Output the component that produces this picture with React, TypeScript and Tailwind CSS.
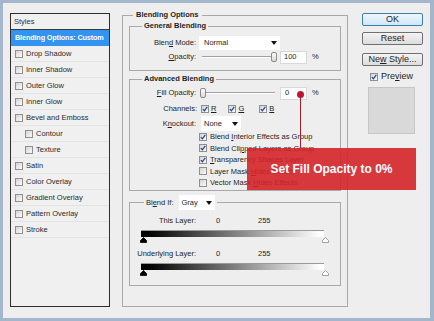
import React from "react";

const U = ({ children }: { children: React.ReactNode }) => (
  <span className="underline decoration-[0.5px] underline-offset-[1px]">{children}</span>
);

function Box({ checked = false }: { checked?: boolean }) {
  return (
    <span className="flex h-[8px] w-[8px] shrink-0 items-center justify-center border border-[#8f8f8f] bg-[linear-gradient(135deg,#d4d4d4,#fbfbfb)]">
      {checked && (
        <svg width="6" height="6" viewBox="0 0 6 6">
          <path d="M0.8 3.1 2.4 4.8 5.3 0.9" fill="none" stroke="#2a4a93" strokeWidth="1.3" />
        </svg>
      )}
    </span>
  );
}

function Arrow() {
  return (
    <svg width="6" height="4" viewBox="0 0 6 4">
      <polygon points="0,0 6,0 3,4" fill="#111" />
    </svg>
  );
}

function Slider({ right = false }: { right?: boolean }) {
  return (
    <div className="relative ml-[6px] h-[14px] w-[73px]">
      <div className="absolute left-0 right-0 top-[6px] h-[2px] border-t border-[#a0a0a0] bg-white" />
      <div
        className={`absolute top-[2px] h-[10px] w-[6px] rounded-[2px] border border-[#8a8a8a] bg-[linear-gradient(#fdfdfd,#d8d8d8)] ${
          right ? "right-[-2px]" : "left-[-2px]"
        }`}
      />
    </div>
  );
}

function Marker({ white = false }: { white?: boolean }) {
  return (
    <svg width="7" height="6" viewBox="0 0 7 6">
      <path
        d="M3.5 0.5 6.5 3.5 6.5 5.5 0.5 5.5 0.5 3.5Z"
        fill={white ? "#fff" : "#000"}
        stroke={white ? "#8a8a8a" : "#000"}
        strokeWidth="0.8"
      />
    </svg>
  );
}

const styles = [
  { label: "Drop Shadow", indent: false },
  { label: "Inner Shadow", indent: false },
  { label: "Outer Glow", indent: false },
  { label: "Inner Glow", indent: false },
  { label: "Bevel and Emboss", indent: false },
  { label: "Contour", indent: true },
  { label: "Texture", indent: true },
  { label: "Satin", indent: false },
  { label: "Color Overlay", indent: false },
  { label: "Gradient Overlay", indent: false },
  { label: "Pattern Overlay", indent: false },
  { label: "Stroke", indent: false },
];

function GradientRow() {
  return (
    <>
      <div className="ml-[11px] mt-[3px] h-[7px] w-[183px] border-t border-[#9a9a9a] bg-[linear-gradient(to_right,#000_4%,#fff_98%)]" />
      <div className="ml-[10px] flex h-[6px] w-[189px] justify-between">
        <Marker />
        <Marker white />
      </div>
    </>
  );
}

export default function App() {
  return (
    <div className="relative h-[321px] w-[434px] overflow-hidden border-b-[3px] border-l-[3px] border-r-[4px] border-t-[3px] border-[#a3b6cb] bg-[#eeeeee] font-['Liberation_Sans',Arial,sans-serif] text-[7.5px] text-[#1e1e1e]">
      <div className="flex pl-[7px] pt-[7px]">
        {/* Styles list */}
        <div className="mt-[3px] h-[294px] w-[100px] border border-[#2f2f2f] bg-[#f0f0f0]">
          <div className="flex h-[16px] items-center border-b border-[#3a3a3a] pl-[3px] text-[#333]">Styles</div>
          <div className="flex h-[16px] items-center whitespace-nowrap bg-[#3393f0] pl-[4px] text-[7.2px] font-bold tracking-[-0.1px] text-white">
            Blending Options: Custom
          </div>
          {styles.map((s) => (
            <div
              key={s.label}
              className={`flex h-[16px] items-center gap-[3px] border-b border-[#e3e3e3] text-[#2a2a2a] ${
                s.indent ? "pl-[14px]" : "pl-[4px]"
              }`}
            >
              <Box />
              <span>{s.label}</span>
            </div>
          ))}
        </div>

        {/* Blending Options */}
        <fieldset className="ml-[12px] h-[297px] w-[226px] border border-[#a9a9a9] px-[6px] pt-[1px]">
          <legend className="ml-[4px] px-[3px] font-bold leading-[10px]">Blending Options</legend>

          <fieldset className="border border-[#a9a9a9] pb-[6px]">
            <legend className="ml-[12px] px-[2px] font-bold leading-[10px]">General Blending</legend>
            <div className="mt-[5px] flex h-[14px] items-center">
              <span className="w-[66px] text-right">
                Blen<U>d</U> Mode:
              </span>
              <div className="ml-[3px] flex h-[14px] w-[81px] items-center justify-between bg-white pl-[5px] pr-[3px]">
                <span>Normal</span>
                <Arrow />
              </div>
            </div>
            <div className="flex h-[14px] items-center">
              <span className="w-[66px] text-right">
                <U>O</U>pacity:
              </span>
              <Slider right />
              <div className="ml-[5px] flex h-[13px] w-[27px] items-center border border-[#d8d8d8] bg-white pl-[3px]">100</div>
              <span className="ml-[5px]">%</span>
            </div>
          </fieldset>

          <fieldset className="mt-[3px] border border-[#a9a9a9] pb-[1.5px]">
            <legend className="ml-[12px] px-[2px] font-bold leading-[10px]">Advanced Blending</legend>
            <div className="mt-[2px] flex h-[14px] items-center">
              <span className="w-[66px] text-right">
                <U>F</U>ill Opacity:
              </span>
              <Slider />
              <div className="ml-[5px] flex h-[13px] w-[27px] items-center border border-[#d8d8d8] bg-white pl-[4px]">0</div>
              <span className="ml-[5px]">%</span>
            </div>
            <div className="mt-[2px] flex h-[14px] items-center">
              <span className="w-[67px] text-right">Channels:</span>
              <span className="ml-[4px] flex items-center gap-[2px]">
                <Box checked />
                <U>R</U>
              </span>
              <span className="ml-[12px] flex items-center gap-[2px]">
                <Box checked />
                <U>G</U>
              </span>
              <span className="ml-[15px] flex items-center gap-[2px]">
                <Box checked />
                <U>B</U>
              </span>
            </div>
            <div className="flex h-[15px] items-center">
              <span className="w-[66px] text-right">
                K<U>n</U>ockout:
              </span>
              <div className="ml-[5px] flex h-[15px] w-[40px] items-center justify-between bg-white pl-[3px] pr-[3px]">
                <span>None</span>
                <Arrow />
              </div>
            </div>
            {[
              { t: <>Blend <U>I</U>nterior Effects as Group</>, c: true },
              { t: <>Blend Cli<U>p</U>ped Layers as Group</>, c: true },
              { t: <><U>T</U>ransparency Shapes Layer</>, c: true },
              { t: <>Layer Mask <U>H</U>ides Effects</>, c: false },
              { t: <>Vector Mask <U>H</U>ides Effects</>, c: false },
            ].map((r, i) => (
              <div key={i} className="ml-[69px] flex h-[11.5px] items-center gap-[3px]">
                <Box checked={r.c} />
                <span>{r.t}</span>
              </div>
            ))}
          </fieldset>

          <fieldset className="mt-[4px] border border-[#a9a9a9] pb-[9px]">
            <legend className="ml-[14px] flex items-center px-[2px]">
              <span>
                Bl<U>e</U>nd If:
              </span>
              <div className="ml-[5px] flex h-[15px] w-[36px] items-center justify-between bg-white pl-[3px] pr-[3px]">
                <span>Gray</span>
                <Arrow />
              </div>
            </legend>
            <div className="mt-[5px] flex h-[12px] items-center">
              <span className="w-[66px] text-right">This Layer:</span>
              <span className="ml-[20px] w-[42px]">0</span>
              <span>255</span>
            </div>
            <GradientRow />
            <div className="mt-[5px] flex h-[12px] items-center">
              <span className="w-[66px] whitespace-nowrap text-right">Underlying Layer:</span>
              <span className="ml-[20px] w-[42px]">0</span>
              <span>255</span>
            </div>
            <GradientRow />
          </fieldset>
        </fieldset>

        {/* Buttons */}
        <div className="ml-[14px] mt-[3px] flex w-[61px] flex-col text-[9px]">
          <div className="flex h-[13px] items-center justify-center rounded-[2px] border border-[#3c7fb1] bg-[linear-gradient(#eef7fd,#cfe7f7)]">
            OK
          </div>
          <div className="mt-[6px] flex h-[13px] items-center justify-center rounded-[2px] border border-[#707070] bg-[linear-gradient(#f4f4f4,#dcdcdc)]">
            Reset
          </div>
          <div className="mt-[8px] flex h-[13px] items-center justify-center rounded-[2px] border border-[#707070] bg-[linear-gradient(#f4f4f4,#dcdcdc)]">
            <span>
              Ne<U>w</U> Style...
            </span>
          </div>
          <div className="ml-[8px] mt-[5px] flex h-[11px] items-center gap-[3px]">
            <Box checked />
            <span>
              Pre<U>v</U>iew
            </span>
          </div>
          <div className="ml-[6px] mt-[5px] h-[47px] w-[47px] border border-[#c6c6c6] bg-[#d9d9d9]" />
        </div>
      </div>

      {/* Annotation */}
      <div className="absolute left-[294px] top-[88px] h-[7px] w-[7px] rounded-full bg-[#c4122f]" />
      <div className="absolute left-[297px] top-[92px] h-[53px] w-[1px] bg-[#a31d2a]" />
      <div className="absolute left-[244px] top-[145px] flex h-[42px] w-[169px] items-center justify-center bg-[rgba(211,35,40,0.9)] text-[12px] font-bold text-white">
        Set Fill Opacity to 0%
      </div>
    </div>
  );
}
